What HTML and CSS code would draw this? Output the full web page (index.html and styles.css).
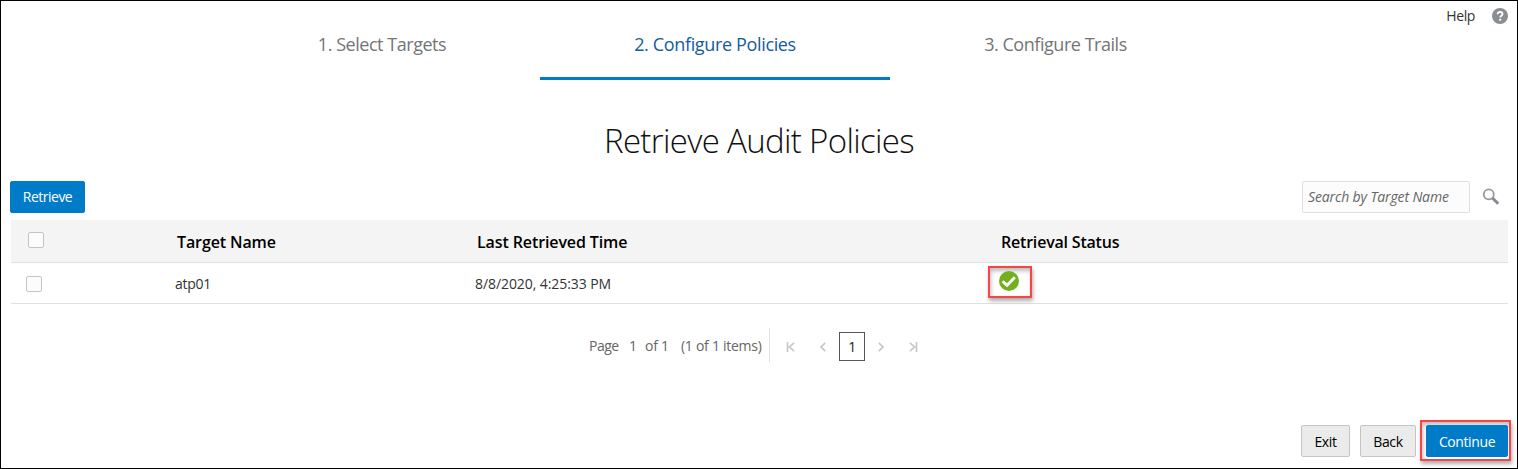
FILE: index.html
```html
<!DOCTYPE html>
<html lang="en">
<head>
<meta charset="utf-8">
<title>Retrieve Audit Policies</title>
<link rel="stylesheet" href="styles.css">
</head>
<body>
<div class="page">
  <header class="top">
    <nav class="steps">
      <a class="step step-targets"><span class="t-step1">1. Select Targets</span></a>
      <a class="step step-policies active"><span class="t-step2">2. Configure Policies</span></a>
      <a class="step step-trails"><span class="t-step3">3. Configure Trails</span></a>
    </nav>
    <div class="help">
      <span class="t-help">Help</span>
      <svg class="help-icon" viewBox="0 0 16 16"><circle cx="8" cy="8" r="8" fill="#8a8d91"/><path d="M5.7 6.3C5.7 4.8 6.7 4 8.1 4s2.4.8 2.4 2c0 1.7-2.3 1.7-2.3 3.4" fill="none" stroke="#fff" stroke-width="1.8"/><rect x="7.2" y="10.8" width="2" height="1.9" fill="#fff"/></svg>
    </div>
  </header>
  <h1 class="title"><span class="t-title">Retrieve Audit Policies</span></h1>
  <div class="toolbar">
    <button class="btn primary retrieve"><span class="t-retrieve">Retrieve</span></button>
    <div class="search">
      <div class="search-box"><span class="t-search">Search by Target Name</span></div>
      <svg class="search-icon" viewBox="0 0 18 18"><circle cx="6.8" cy="6.4" r="5" fill="none" stroke="#96999d" stroke-width="1.8"/><path d="M10.4 10L16.2 15.8" stroke="#85898e" stroke-width="3"/></svg>
    </div>
  </div>
  <div class="table">
    <div class="row head">
      <div><span class="check"></span></div>
      <div class="label"><span class="t-h1">Target Name</span></div>
      <div class="label"><span class="t-h2">Last Retrieved Time</span></div>
      <div class="label status-head"><span class="t-h3">Retrieval Status</span></div>
    </div>
    <div class="row body">
      <div><span class="check"></span></div>
      <div><span class="t-atp">atp01</span></div>
      <div><span class="t-time">8/8/2020, 4:25:33 PM</span></div>
      <div class="status"><span class="marker">
        <svg class="ok" viewBox="0 0 20 20"><circle cx="10" cy="10" r="10" fill="#72b01d"/><path d="M3.6 10.4L8.1 14.3L15.8 6.2" fill="none" stroke="#fff" stroke-width="2.8"/></svg>
      </span></div>
    </div>
  </div>
  <div class="paging">
    <span class="t-page">Page</span><span class="t-cur">1</span><span class="t-of">of 1</span><span class="t-items">(1 of 1 items)</span>
    <span class="divider"></span>
    <svg class="arrow first" viewBox="0 0 10 10"><path d="M1.5 0V10M8 .8L3.4 5L8 9.2"/></svg>
    <svg class="arrow prev" viewBox="0 0 10 10"><path d="M7.2.8L3 5L7.2 9.2"/></svg>
    <span class="current">1</span>
    <svg class="arrow next" viewBox="0 0 10 10"><path d="M2.8.8L7 5L2.8 9.2"/></svg>
    <svg class="arrow last" viewBox="0 0 10 10"><path d="M8.5 0V10M2 .8L6.6 5L2 9.2"/></svg>
  </div>
  <footer class="actions">
    <button class="btn exit"><span class="t-exit">Exit</span></button>
    <button class="btn back"><span class="t-back">Back</span></button>
    <div class="marker continue-marker"><button class="btn primary continue"><span class="t-cont">Continue</span></button></div>
  </footer>
</div>
</body>
</html>
```
FILE: styles.css
```css
* { box-sizing: border-box; }
body { margin: 0; font-family: "Open Sans", "Noto Sans", sans-serif; font-size: 14px; letter-spacing: -.4px; color: #333; background: #fff; }
span { white-space: nowrap; }
svg { display: block; flex: none; }
.page { width: 1518px; height: 469px; border: 1px solid #000; overflow: hidden; display: flex; flex-direction: column; }
.top { height: 79px; display: flex; justify-content: space-between; padding: 0 9px 0 223px; flex: none; }
.steps { display: flex; }
.step { height: 79px; display: flex; justify-content: center; font-size: 18px; letter-spacing: -.46px; line-height: 24px; padding-top: 31px; color: #757575; border-bottom: 3px solid transparent; }
.step-targets { width: 316px; }
.step-policies { width: 350px; letter-spacing: -.35px; }
.step-trails { width: 331px; }
.step.active { color: #145c9e; border-bottom-color: #007bc8; }
.help { display: flex; align-items: center; height: 16px; margin-top: 7px; gap: 17px; color: #333; }
.t-help { padding-bottom: 1px; }
.help-icon { width: 16px; height: 16px; }
.title { margin: 37px 0 0; height: 48px; line-height: 48px; text-align: center; font-weight: 300; font-size: 33px; letter-spacing: -.66px; color: #111; flex: none; }
.toolbar { display: flex; justify-content: space-between; align-items: center; margin-top: 16px; padding: 0 17px 0 9px; height: 32px; flex: none; }
.btn { font: inherit; letter-spacing: -.4px; height: 32px; padding: 0; display: flex; align-items: center; justify-content: center; border: 1px solid #c4c4c4; border-radius: 2px; background: #ebebeb; color: #000; }
.btn.primary { background: #007bc8; border-color: #007bc8; color: #fff; }
.btn.retrieve { width: 75px; padding-bottom: 1px; letter-spacing: -.5px; }
.search { display: flex; align-items: center; gap: 12px; }
.search-box { width: 168px; height: 32px; border: 1px solid #dfe0e1; border-radius: 2px; background: #fcfcfc; padding-left: 5px; line-height: 30px; font-style: italic; letter-spacing: -.13px; color: #666; }
.search-icon { width: 18px; height: 18px; }
.table { margin: 7px 9px 0 10px; flex: none; }
.row { display: grid; grid-template-columns: 164px 300px 513px 1fr; align-items: center; border-bottom: 1px solid #dfe0e1; }
.head { height: 43px; background: #f4f4f4; font-size: 16px; letter-spacing: -.11px; font-weight: 600; color: #000; padding-left: 2px; }
.label { padding-top: 2px; }
.status-head { padding-left: 11px; }
.head .status-head { letter-spacing: -.2px; }
.body { height: 41px; }
.t-atp { letter-spacing: -.3px; }
.t-time { letter-spacing: -.08px; }
.check { display: block; width: 16px; height: 16px; border: 1px solid #c4c4c4; border-radius: 2px; background: #fcfcfc; margin-left: 15px; }
.head .check { margin-bottom: 3px; }
.body .check { margin-top: 1px; }
.marker { border: 2px solid #f64545; box-shadow: 1px 3px 4px rgba(0,0,0,.32), inset 1px 3px 4px rgba(0,0,0,.26); }
.status .marker { display: flex; width: 44px; height: 32px; padding: 3px 0 0 9px; margin-top: -2px; }
.ok { width: 20px; height: 20px; }
.paging { display: flex; align-items: center; margin: 24px 0 0 588px; height: 35px; letter-spacing: -.27px; color: #666; flex: none; }
.t-page { width: 40px; letter-spacing: -.5px; }
.t-cur { width: 16px; }
.t-of { width: 36px; }
.t-items { width: 88px; }
.divider { width: 1px; height: 34px; background: #dfe0e1; margin-bottom: 1px; }
.arrow { width: 10px; height: 10px; fill: none; stroke: #c8cacc; stroke-width: 1.8; margin-top: 2px; }
.first { margin-left: 16px; }
.prev { margin-left: 22px; }
.current { width: 26px; height: 29px; margin-left: 11px; border: 1px solid #555; color: #222; line-height: 28px; text-align: center; margin-top: 2px; }
.next { margin-left: 11px; }
.last { margin-left: 22px; }
.actions { margin: 57px 6px 0 0; display: flex; justify-content: flex-end; align-items: center; height: 41px; flex: none; }
.exit, .back { padding-top: 2px; }
.exit { width: 49px; margin-right: 10px; }
.back { width: 56px; margin-right: 4px; }
.continue-marker { width: 91px; height: 41px; padding: 3px 0 0 4px; }
.continue { width: 82px; }
```
